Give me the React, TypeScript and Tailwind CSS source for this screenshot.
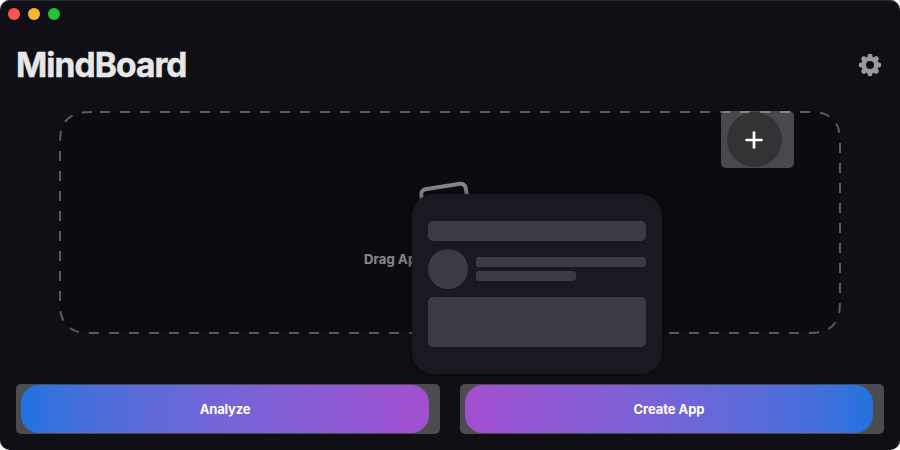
import React from "react";

const GEAR_ANGLES = [0, 45, 90, 135];

function Gear() {
  return (
    <svg width="24" height="24" viewBox="-12 -12 24 24" className="text-[#9a9a9d]">
      <mask id="hub">
        <rect x="-12" y="-12" width="24" height="24" fill="white" />
        <circle r="4" fill="black" />
      </mask>
      <g mask="url(#hub)" fill="currentColor">
        <circle r="8.6" />
        {GEAR_ANGLES.map((a) => (
          <rect key={a} x="-2.5" y="-11.2" width="5" height="22.4" rx="2.2" transform={`rotate(${a})`} />
        ))}
      </g>
    </svg>
  );
}

// Rounded rectangle with continuous-curvature corners, traced clockwise.
function squircle(x: number, y: number, w: number, h: number, r: number) {
  const a = 1.528665 * r, b = 1.088493 * r, c = 0.868407 * r, d = 0.631494 * r;
  const e = 0.372824 * r, f = 0.16906 * r, g = 0.074911 * r;
  const X = x + w, Y = y + h;
  return [
    `M${x + a} ${y}H${X - a}`,
    `C${X - b} ${y} ${X - c} ${y} ${X - d} ${y + g}`,
    `C${X - e} ${y + f} ${X - f} ${y + e} ${X - g} ${y + d}`,
    `C${X} ${y + c} ${X} ${y + b} ${X} ${y + a}V${Y - a}`,
    `C${X} ${Y - b} ${X} ${Y - c} ${X - g} ${Y - d}`,
    `C${X - f} ${Y - e} ${X - e} ${Y - f} ${X - d} ${Y - g}`,
    `C${X - c} ${Y} ${X - b} ${Y} ${X - a} ${Y}H${x + a}`,
    `C${x + b} ${Y} ${x + c} ${Y} ${x + d} ${Y - g}`,
    `C${x + e} ${Y - f} ${x + f} ${Y - e} ${x + g} ${Y - d}`,
    `C${x} ${Y - c} ${x} ${Y - b} ${x} ${Y - a}V${y + a}`,
    `C${x} ${y + b} ${x} ${y + c} ${x + g} ${y + d}`,
    `C${x + f} ${y + e} ${x + e} ${y + f} ${x + d} ${y + g}`,
    `C${x + c} ${y} ${x + b} ${y} ${x + a} ${y}Z`,
  ].join("");
}

function DropZone() {
  return (
    <section className="relative mx-[43px] mt-[22px] h-[223px]">
      <svg width="782" height="223" className="absolute inset-0">
        <path d={squircle(1, 1, 780, 221, 25)} fill="#0c0b10" stroke="#5b5b5f" strokeWidth="2" strokeDasharray="10 10" strokeDashoffset="-1.8" />
      </svg>
      <svg width="60" height="60" viewBox="0 0 60 60" className="absolute left-[357px] top-[66px]" fill="none" stroke="#868688" strokeWidth="4">
        <rect x="7" y="9.4" width="45" height="36" rx="5" transform="rotate(-9 29 27)" />
      </svg>
      <p className="absolute left-[305px] top-[140px] whitespace-nowrap text-[13px] font-bold leading-4 tracking-[0.15px] text-[#868688] [-webkit-text-stroke:0.2px_#868688]">Drag Ap</p>
      <button className="absolute left-[662px] top-0 h-[57px] w-[73px] rounded-[5px] bg-white/25 pl-[6px]" aria-label="Add">
        <span className="flex h-[55px] w-[55px] items-center justify-center rounded-full bg-[#333335]">
          <svg width="19" height="19" viewBox="0 0 19 19" className="mr-px mt-[2px]" stroke="white" strokeWidth="2.7" strokeLinecap="round">
            <path d="M9 1.5V16.5M1.5 9H16.5" />
          </svg>
        </span>
      </button>
      <PreviewCard />
    </section>
  );
}

function PreviewCard() {
  return (
    <div className="absolute left-[353px] top-[83px] flex h-[180px] w-[250px] flex-col justify-center gap-2 rounded-[22px] bg-[#191922] px-4 shadow-[0_0_10px_rgba(0,0,0,0.45)]">
      <div className="h-5 rounded-[5px] bg-[#3c3b44]" />
      <div className="flex items-center gap-2">
        <div className="h-10 w-10 rounded-full bg-[#3c3b44]" />
        <div className="flex flex-1 flex-col gap-1">
          <div className="h-[10px] rounded-[3px] bg-[#3c3b44]" />
          <div className="h-[10px] w-[100px] rounded-[3px] bg-[#3c3b44]" />
        </div>
      </div>
      <div className="h-[50px] rounded-[5px] bg-[#3c3b44]" />
    </div>
  );
}

export default function App() {
  return (
    <div className="h-[450px] w-[900px] bg-white font-['Inter',sans-serif]">
      <main className="flex h-[450px] flex-col overflow-hidden rounded-[10px] bg-[#100f15] px-4 shadow-[inset_0_1px_0_#29292e]">
        <div className="-ml-2 flex gap-2 pt-2">
          <i className="h-3 w-3 rounded-full bg-[#ff5550]" />
          <i className="h-3 w-3 rounded-full bg-[#ffb52b]" />
          <i className="h-3 w-3 rounded-full bg-[#24c138]" />
        </div>
        <header className="mt-[20px] flex h-[49px] items-center justify-between pr-[2px]">
          <h1 className="pt-[2px] text-[33.5px] font-bold leading-[49px] tracking-[-0.9px] text-[#e7e7e8] [-webkit-text-stroke:0.5px_#e7e7e8]">MindBoard</h1>
          <Gear />
        </header>
        <DropZone />
        <footer className="mt-[50px] flex gap-5 text-[13px] font-bold text-white">
          <button className="h-[50px] flex-1 rounded-[5px] bg-[#4c4c50] py-px pl-[5px] pr-[11px]">
            <span className="flex h-12 items-center justify-center rounded-[18px] bg-linear-to-r from-[#1f72de] to-[#a24fd0] pt-[2px] tracking-[-0.2px]">Analyze</span>
          </button>
          <button className="h-[50px] flex-1 rounded-[5px] bg-[#4c4c50] py-px pl-[5px] pr-[11px]">
            <span className="flex h-12 items-center justify-center rounded-[18px] bg-linear-to-r from-[#a24fd0] to-[#1f72de] pt-[2px] tracking-[-0.05px]">Create App</span>
          </button>
        </footer>
      </main>
    </div>
  );
}
